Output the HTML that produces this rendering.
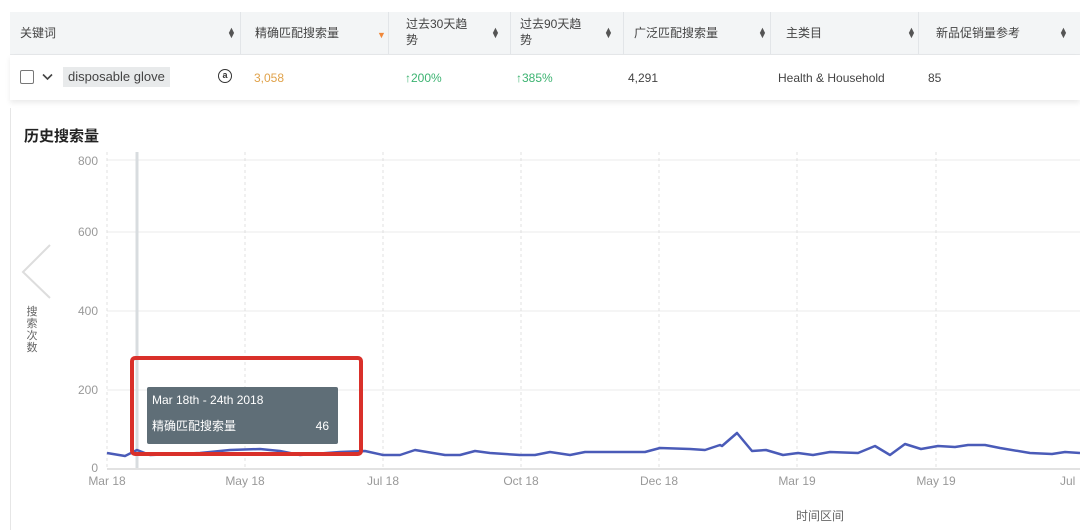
<!DOCTYPE html>
<html><head><meta charset="utf-8"><style>
body{margin:0;width:1080px;height:530px;background:#fff;font-family:"Liberation Sans","Noto Sans CJK SC",sans-serif;overflow:hidden;position:relative;color:#333}
.hdr{position:absolute;left:10px;top:12px;width:1070px;height:42px;background:#f3f5f6;border-bottom:1px solid #e6e8ea}
.row{position:absolute;left:10px;top:55px;width:1070px;height:45px;background:#fff;box-shadow:0 3px 5px rgba(0,0,0,.08)}
.c{position:absolute;font-size:12px;color:#444;line-height:16px}
.sep{position:absolute;top:12px;height:42px;width:1px;background:#e2e5e8}
.s{position:absolute;font-size:9px;color:#555;line-height:5px}
</style></head><body>
<div class="hdr"></div>
<div class="row"></div>
<div class="sep" style="left:240px"></div><div class="sep" style="left:388px"></div><div class="sep" style="left:510px"></div><div class="sep" style="left:623px"></div><div class="sep" style="left:770px"></div><div class="sep" style="left:918px"></div>
<div class="c" style="left:20px;top:25px">关键词</div>
<div class="c" style="left:255px;top:25px">精确匹配搜索量</div>
<div class="c" style="left:406px;top:16px">过去30天趋<br>势</div>
<div class="c" style="left:520px;top:16px">过去90天趋<br>势</div>
<div class="c" style="left:634px;top:25px">广泛匹配搜索量</div>
<div class="c" style="left:786px;top:25px">主类目</div>
<div class="c" style="left:936px;top:25px">新品促销量参考</div>
<div class="s" style="left:227px;top:28px">▲<br>▼</div>
<div class="c" style="left:377px;top:27px;color:#f0883a;font-size:9px">▼</div>
<div class="s" style="left:491px;top:28px">▲<br>▼</div>
<div class="s" style="left:604px;top:28px">▲<br>▼</div>
<div class="s" style="left:758px;top:28px">▲<br>▼</div>
<div class="s" style="left:907px;top:28px">▲<br>▼</div>
<div class="s" style="left:1059px;top:28px">▲<br>▼</div>
<div style="position:absolute;left:20px;top:70px;width:12px;height:12px;border:1px solid #777;border-radius:2px"></div>
<svg style="position:absolute;left:42px;top:73px" width="11" height="8"><path d="M1 1.5L5.5 6L10 1.5" stroke="#444" stroke-width="1.6" fill="none"/></svg>
<div class="c" style="left:63px;top:67px;background:#e8eaeb;padding:2px 5px;font-size:13px">disposable glove</div>
<div style="position:absolute;left:218px;top:69px;width:12px;height:12px;border:1.5px solid #333;border-radius:50%;font-size:9px;line-height:11px;text-align:center;font-weight:bold">a</div>
<div class="c" style="left:254px;top:70px;color:#e0a24a">3,058</div>
<div class="c" style="left:405px;top:70px;color:#3cb371">↑200%</div>
<div class="c" style="left:516px;top:70px;color:#3cb371">↑385%</div>
<div class="c" style="left:628px;top:70px">4,291</div>
<div class="c" style="left:778px;top:70px">Health &amp; Household</div>
<div class="c" style="left:928px;top:70px">85</div>
<div style="position:absolute;left:10px;top:108px;width:1px;height:422px;background:#e6e6e6"></div>
<div style="position:absolute;left:24px;top:125px;font-size:15px;font-weight:bold;color:#222">历史搜索量</div>
<svg style="position:absolute;left:0;top:0" width="1080" height="530">
<g stroke="#ebebeb" stroke-width="1">
<line x1="107" y1="160" x2="1080" y2="160"/><line x1="107" y1="232" x2="1080" y2="232"/><line x1="107" y1="311" x2="1080" y2="311"/><line x1="107" y1="390" x2="1080" y2="390"/>
</g>
<g stroke="#e0e0e0" stroke-dasharray="3,3">
<line x1="107" y1="152" x2="107" y2="469"/><line x1="245" y1="152" x2="245" y2="469"/><line x1="383" y1="152" x2="383" y2="469"/><line x1="521" y1="152" x2="521" y2="469"/><line x1="659" y1="152" x2="659" y2="469"/><line x1="797" y1="152" x2="797" y2="469"/><line x1="936" y1="152" x2="936" y2="469"/>
</g>
<line x1="137" y1="152" x2="137" y2="469" stroke="#d8dcdf" stroke-width="3"/>
<line x1="107" y1="469" x2="1080" y2="469" stroke="#e2e2e2" stroke-width="2"/>
<path d="M50 245L23 272L50 298" stroke="#ddd" stroke-width="2" fill="none"/>
<polyline fill="none" stroke="#4a5bb8" stroke-width="2.5" stroke-linejoin="round" points="107,453 125,456 137,450 150,455 200,453 230,450 260,449 280,451 300,455 340,452 365,451 383,455 400,455 415,450 445,455 460,455 475,451 490,453 520,455 535,455 550,452 570,455 585,452 600,452 645,452 660,448 690,449 705,450 720,445 722,446 737,433 752,451 766,450 783,455 798,453 813,455 830,452 858,453 875,446 890,455 905,444 921,449 938,446 955,447 968,445 985,445 1000,448 1030,453 1052,454 1065,452 1080,453"/>
<g font-size="12" fill="#999" font-family="Liberation Sans,sans-serif">
<text x="98" y="165" text-anchor="end">800</text><text x="98" y="236" text-anchor="end">600</text><text x="98" y="315" text-anchor="end">400</text><text x="98" y="394" text-anchor="end">200</text><text x="98" y="472" text-anchor="end">0</text>
<text x="107" y="485" text-anchor="middle">Mar 18</text><text x="245" y="485" text-anchor="middle">May 18</text><text x="383" y="485" text-anchor="middle">Jul 18</text><text x="521" y="485" text-anchor="middle">Oct 18</text><text x="659" y="485" text-anchor="middle">Dec 18</text><text x="797" y="485" text-anchor="middle">Mar 19</text><text x="936" y="485" text-anchor="middle">May 19</text><text x="1060" y="485">Jul</text>
</g>
<text x="820" y="520" font-size="12" fill="#666" text-anchor="middle" font-family="Liberation Sans,Noto Sans CJK SC,sans-serif">时间区间</text>
<g font-size="11" fill="#666" font-family="Noto Sans CJK SC,sans-serif" text-anchor="middle">
<text x="32" y="315">搜</text><text x="32" y="327">索</text><text x="32" y="339">次</text><text x="32" y="351">数</text>
</g>
<rect x="147" y="387" width="191" height="57" rx="2" fill="#5f6e77"/>
<text x="152" y="404" font-size="12" fill="#fff" font-family="Liberation Sans,sans-serif">Mar 18th - 24th 2018</text>
<text x="152" y="430" font-size="12" fill="#fff" font-family="Liberation Sans,Noto Sans CJK SC,sans-serif">精确匹配搜索量</text>
<text x="329" y="430" font-size="12" fill="#fff" text-anchor="end" font-family="Liberation Sans,sans-serif">46</text>
<rect x="132" y="358" width="229" height="96" rx="3" fill="none" stroke="#d9302a" stroke-width="4"/>
</svg>
</body></html>
